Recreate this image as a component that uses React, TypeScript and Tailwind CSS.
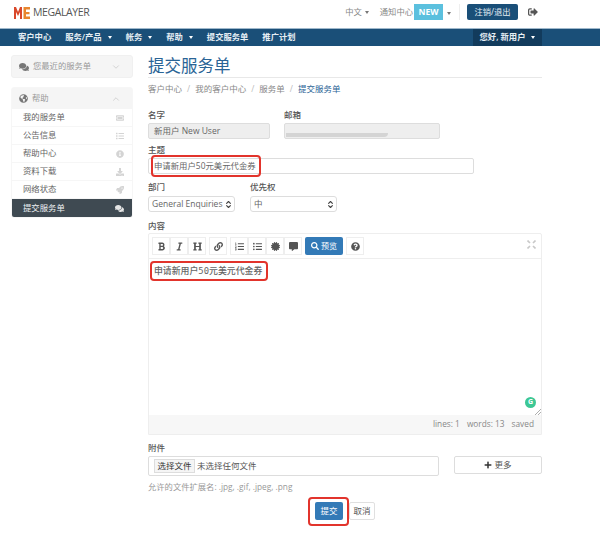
import React from "react";
import {
  FaComments, FaGlobeAmericas, FaTicketAlt, FaList, FaInfoCircle, FaDownload, FaRocket,
  FaBold, FaItalic, FaHeading, FaLink, FaListOl, FaListUl, FaCertificate, FaCommentAlt,
  FaSearch, FaQuestionCircle, FaPlus, FaSignOutAlt,
} from "react-icons/fa";
import { ChevronDown, ChevronUp, ChevronsUpDown } from "lucide-react";

const font = "[font-family:'Open_Sans','Noto_Sans_CJK_SC',sans-serif]";

function Caret({ light = false }: { light?: boolean }) {
  return <span className={`inline-block w-0 h-0 border-x-[2.5px] border-x-transparent border-t-[3px] ${light ? "border-t-white" : "border-t-[#777]"}`} />;
}

function Logo() {
  return (
    <div className="flex items-center gap-[3px] pt-[1px]">
      <svg width="16" height="14" viewBox="0 0 16 14">
        <path d="M0 13V1h2l2 5 2-5h2v12H6V6L4 10 2 6v7z" fill="#d9482b" />
        <path d="M9.5 1H16v2.5h-4V6h3.5v2.2H12V10.5h4V13H9.5z" fill="#e8862e" />
      </svg>
      <span className="text-[10.5px] tracking-[-0.4px] text-[#555] leading-none">MEGALAYER</span>
    </div>
  );
}

function NavItem({ label, caret }: { label: string; caret?: boolean }) {
  return (
    <span className="flex items-center gap-[6px] text-[8.3px] font-semibold text-[#e6eef4] whitespace-nowrap">
      {label}
      {caret && <Caret light />}
    </span>
  );
}

const sideItems: [string, React.ReactNode][] = [
  ["我的服务单", <FaTicketAlt />],
  ["公告信息", <FaList />],
  ["帮助中心", <FaInfoCircle />],
  ["资料下载", <FaDownload />],
  ["网络状态", <FaRocket />],
];

function Sidebar() {
  return (
    <aside className="w-[122px] shrink-0 flex flex-col gap-[9px]">
      <div className="h-[23px] bg-[#f5f5f5] rounded-[3px] border border-[#f0f0f0] flex items-center pl-[7px] pr-[11px] text-[8.3px] text-[#999]">
        <FaComments className="text-[#777] text-[10px] mr-[4px]" />
        <span className="flex-1">您最近的服务单</span>
        <ChevronDown size={10} className="text-[#ccc]" />
      </div>
      <div className="rounded-[3px] border border-[#f6f6f6]">
        <div className="h-[21px] bg-[#f5f5f5] flex items-center pl-[7px] pr-[11px] text-[8.3px] text-[#999]">
          <FaGlobeAmericas className="text-[#777] text-[9px] mr-[4px]" />
          <span className="flex-1">帮助</span>
          <ChevronUp size={10} className="text-[#ccc]" />
        </div>
        {sideItems.map(([label, icon]) => (
          <div key={label} className="h-[18px] flex items-center justify-between pl-[11px] pr-[8px] border-b border-[#f6f6f6] text-[8.4px] text-[#666]">
            <span>{label}</span>
            <span className="text-[#d4d4d4] text-[8px]">{icon}</span>
          </div>
        ))}
        <div className="h-[18px] bg-[#3f4a52] flex items-center justify-between pl-[11px] pr-[8px] text-[8.4px] text-[#eef1f3] rounded-b-[2px]">
          <span>提交服务单</span>
          <FaComments className="text-[#e5e5e5] text-[9px]" />
        </div>
      </div>
    </aside>
  );
}

function Label({ children }: { children: React.ReactNode }) {
  return <div className="text-[8.5px] leading-[12px] font-medium text-[#555]">{children}</div>;
}

function ToolBtn({ children }: { children: React.ReactNode }) {
  return <span className="w-[18px] h-[18px] bg-white flex items-center justify-center text-[9px] text-[#555] border border-[#eee]">{children}</span>;
}

function Select({ value, width }: { value: string; width: string }) {
  return (
    <div className={`${width} h-[16px] bg-white border border-[#ddd] rounded-[3px] flex items-center justify-between pl-[3px] pr-[1px] text-[8.5px] text-[#666] whitespace-nowrap`}>
      <span>{value}</span>
      <ChevronsUpDown size={9} strokeWidth={3} className="text-[#444] shrink-0" />
    </div>
  );
}

function Main() {
  return (
    <main className="w-[394px] shrink-0 -mt-[1px]">
      <h1 className="text-[16.5px] leading-[24px] text-[#2a6496] font-normal">提交服务单</h1>
      <div className="h-px bg-[#e8e8e8] mt-[-1px]" />
      <div className="flex items-center gap-[5px] mt-[5px] h-[12px] text-[8.5px] text-[#888]">
        <span>客户中心</span><span className="text-[#bbb]">/</span>
        <span>我的客户中心</span><span className="text-[#bbb]">/</span>
        <span>服务单</span><span className="text-[#bbb]">/</span>
        <span className="text-[#2a6496]">提交服务单</span>
      </div>

      <div className="flex gap-[14px] mt-[14px]">
        <div>
          <Label>名字</Label>
          <div className="w-[122px] h-[16px] mt-[2px] bg-[#eee] border border-[#ddd] rounded-[2px] flex items-center pl-[5px] text-[8.5px] text-[#666]">新用户 New User</div>
        </div>
        <div>
          <Label>邮箱</Label>
          <div className="w-[156px] h-[16px] mt-[2px] bg-[#eee] border border-[#ddd] rounded-[2px] flex items-end pl-[1px] pb-[1px]">
            <div className="w-[102px] h-[4px] bg-[#d4d4d4] rounded-br-[4px]" />
          </div>
        </div>
      </div>

      <div className="mt-[5px]"><Label>主题</Label></div>
      <div className="relative w-[326px] h-[16px] mt-[2px] border border-[#ddd] rounded-[2px] flex items-center pl-[5px] text-[8.4px] text-[#666]">
        申请新用户50元美元代金券
        <span className="absolute left-[2px] -top-[4px] w-[110px] h-[22px] border-2 border-[#e2342c] rounded-[4px]" />
      </div>

      <div className="flex gap-[15px] mt-[7px]">
        <div>
          <Label>部门</Label>
          <div className="mt-[3px]"><Select value="General Enquiries" width="w-[87px]" /></div>
        </div>
        <div>
          <Label>优先权</Label>
          <div className="mt-[3px]"><Select value="中" width="w-[87px]" /></div>
        </div>
      </div>

      <div className="mt-[8px]"><Label>内容</Label></div>
      <div className="mt-[1px] border border-[#eee] rounded-t-[2px]">
        <div className="relative h-[25px] border-b border-[#eee] flex items-center pl-[3px] gap-[3px]">
          <div className="flex">
            <ToolBtn><FaBold /></ToolBtn>
            <ToolBtn><FaItalic /></ToolBtn>
            <ToolBtn><FaHeading /></ToolBtn>
          </div>
          <ToolBtn><FaLink /></ToolBtn>
          <div className="flex">
            <ToolBtn><FaListOl /></ToolBtn>
            <ToolBtn><FaListUl /></ToolBtn>
            <ToolBtn><FaCertificate /></ToolBtn>
            <ToolBtn><FaCommentAlt /></ToolBtn>
          </div>
          <span className="w-[38px] h-[18px] bg-[#337ab7] rounded-[2px] flex items-center justify-center gap-[2px] text-[8px] text-white"><FaSearch />预览</span>
          <ToolBtn><FaQuestionCircle /></ToolBtn>
          <svg className="absolute right-[5px] top-[6px]" width="9" height="9" viewBox="0 0 9 9" stroke="#c8c8c8" strokeWidth="1.6" fill="none">
            <path d="M0.5 0.5l2.5 2.5M8.5 0.5L6 3M0.5 8.5L3 6M8.5 8.5L6 6" />
          </svg>
        </div>
        <div className="relative h-[156px]">
          <div className="pl-[5px] pt-[6px] text-[8.9px] leading-[12px] font-medium text-[#666] [font-family:'DejaVu_Sans_Mono','Noto_Sans_CJK_SC',monospace]">申请新用户50元美元代金券</div>
          <span className="absolute left-[1px] top-[2px] w-[118px] h-[20px] border-2 border-[#e2342c] rounded-[4px]" />
          <span className="absolute right-[5px] bottom-[7px] w-[11px] h-[11px] rounded-full bg-[#3dc795] text-white text-[7px] font-bold flex items-center justify-center">G</span>
          <svg className="absolute right-0 bottom-0" width="6" height="6" viewBox="0 0 6 6" stroke="#999" strokeWidth="0.8"><path d="M0 6L6 0M3 6L6 3" /></svg>
        </div>
        <div className="h-[19px] bg-[#f7f7f7] flex items-center justify-end gap-[7px] pr-[7px] text-[8.3px] text-[#888]">
          <span>lines: 1</span><span>words: 13</span><span>saved</span>
        </div>
      </div>

      <div className="mt-[7px]"><Label>附件</Label></div>
      <div className="flex justify-between items-start mt-[2px]">
        <div className="w-[291px] h-[20px] border border-[#ddd] rounded-[2px] flex items-center pl-[5px] gap-[2px] text-[8.5px] text-[#555]">
          <span className="h-[14px] w-[41px] border border-[#ddd] bg-[#f5f5f5] flex items-center justify-center text-[#333]">选择文件</span>
          <span>未选择任何文件</span>
        </div>
        <div className="w-[88px] h-[18px] border border-[#ddd] rounded-[2px] flex items-center justify-center gap-[2px] text-[8.5px] text-[#555]">
          <FaPlus className="text-[8px] text-[#333]" />更多
        </div>
      </div>
      <div className="mt-[5px] text-[8.3px] leading-[12px] text-[#999]">允许的文件扩展名: .jpg, .gif, .jpeg, .png</div>

      <div className="flex justify-center gap-[6px] mt-[9px]">
        <span className="relative w-[28px] h-[18px] bg-[#337ab7] rounded-[2px] flex items-center justify-center text-[8.5px] text-white">
          提交
          <span className="absolute -left-[7px] -top-[5px] w-[41px] h-[29px] border-2 border-[#e2342c] rounded-[4px]" />
        </span>
        <span className="w-[26px] h-[18px] border border-[#e0e0e0] rounded-[2px] flex items-center justify-center text-[8.5px] text-[#555]">取消</span>
      </div>
    </main>
  );
}

export default function App() {
  return (
    <div className={`w-[600px] h-[540px] bg-white overflow-hidden ${font}`}>
      <header className="h-[28px] flex items-center justify-between pl-[14px] pr-[62px] pb-[4px]">
        <Logo />
        <div className="flex items-center text-[8.3px] text-[#888]">
          <span className="flex items-center gap-[3px]">中文 <Caret /></span>
          <span className="ml-[11px]">通知中心</span>
          <span className="ml-[1px] w-[29px] h-[16px] bg-[#5bc0de] text-white font-bold text-[8.5px] flex items-center justify-center">NEW</span>
          <span className="ml-[4px]"><Caret /></span>
          <span className="ml-[8px] h-[16px] w-px bg-[#eee]" />
          <span className="ml-[7px] w-[51px] h-[16px] bg-[#1a4f78] rounded-[2px] text-[#e6eef4] flex items-center justify-center">注销/退出</span>
          <FaSignOutAlt className="ml-[10px] text-[10px] text-[#555]" />
        </div>
      </header>
      <nav className="h-[18px] bg-[#1a4f78] border-t border-[#9fb8cb] flex items-stretch justify-between pl-[18px] pr-[58px]">
        <div className="flex items-center gap-[14px]">
          <NavItem label="客户中心" />
          <NavItem label="服务/产品" caret />
          <NavItem label="帐务" caret />
          <NavItem label="帮助" caret />
          <NavItem label="提交服务单" />
          <NavItem label="推广计划" />
        </div>
        <div className="w-[69px] bg-[#123b5c] flex items-center justify-center">
          <NavItem label="您好, 新用户" caret />
        </div>
      </nav>
      <div className="flex gap-[15px] pl-[11px] pt-[9px]">
        <Sidebar />
        <Main />
      </div>
    </div>
  );
}
